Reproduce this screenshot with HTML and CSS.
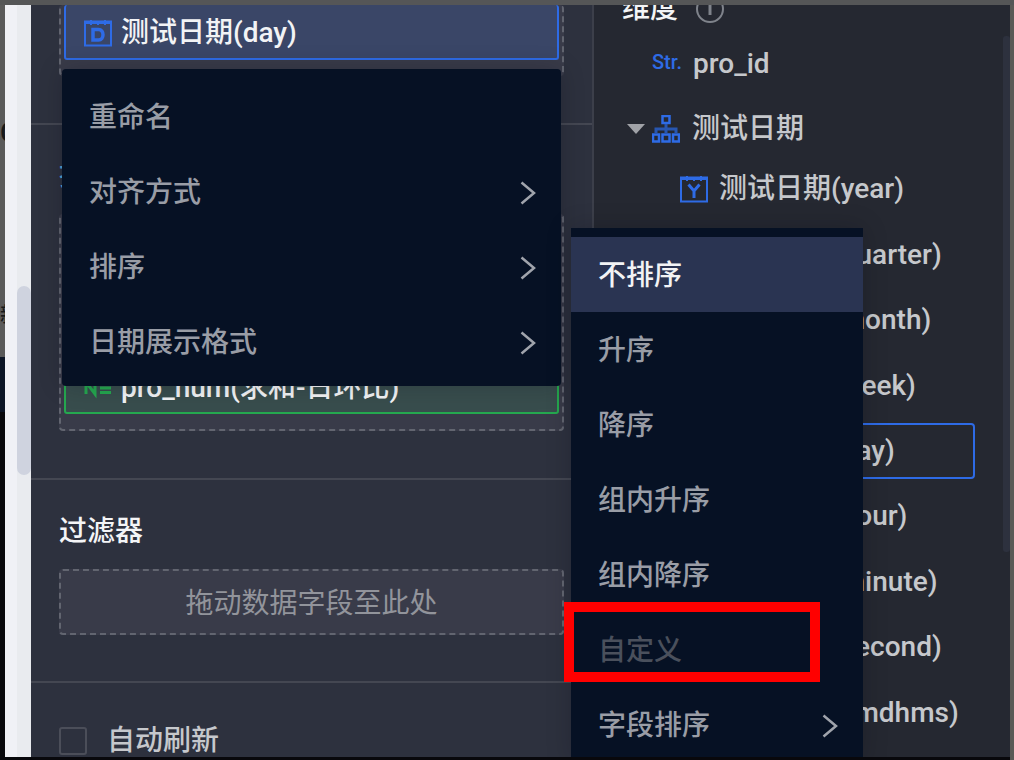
FILE: index.html
```html
<!DOCTYPE html>
<html lang="zh-CN">
<head>
<meta charset="utf-8">
<title>图表设置</title>
<link rel="stylesheet" href="styles.css">
</head>
<body>
<div class="backdrop">
  <div class="behind" aria-hidden="true">
    <div class="behind-light"><span class="glyph">C</span><span class="small">新</span></div>
    <div class="behind-dark"></div>
  </div>
  <main class="window">
    <div class="gutter"><div class="track"><div class="thumb"></div></div></div>

    <section class="settings">
      <div class="group group-dimension">
        <div class="dropzone open-top">
          <div class="chip chip-blue">
            <svg class="icon" viewBox="0 0 28 28"><path d="M1 2.500H27V26.500H1Z M1 4H27" fill="none" stroke="#2e6be6" stroke-width="2"/><path d="M7 1v5M14 2v4M21 1v5" stroke="#2e6be6" stroke-width="2"/><path d="M9 10.500h5.500c6 0 6 10.500 0 10.500H9Z" fill="none" stroke="#2e6be6" stroke-width="3.500"/></svg>
            <span>测试日期(day)</span>
          </div>
        </div>
      </div>

      <div class="group group-measure">
        <h2 class="measure-title">指标</h2>
        <div class="dropzone tall">
          <div class="chip chip-green">
            <svg class="icon" viewBox="0 0 28 28"><path d="M2 20V8L11 20V8M16 9.500h11M16 14h11M16 18.500h11" fill="none" stroke="#25a84f" stroke-width="3"/></svg>
            <span>pro_num(求和-日环比)</span>
          </div>
        </div>
      </div>

      <div class="group group-filter">
        <h2>过滤器</h2>
        <div class="dropzone empty">拖动数据字段至此处</div>
      </div>

      <label class="refresh"><input type="checkbox"><span>自动刷新</span></label>

      <div class="menu context-menu" role="menu">
        <button class="item" role="menuitem">重命名</button>
        <button class="item" role="menuitem">对齐方式<svg class="chevron" viewBox="0 0 16 24"><path d="M1.500 1.500L14 12L1.500 22.500"/></svg></button>
        <button class="item" role="menuitem">排序<svg class="chevron" viewBox="0 0 16 24"><path d="M1.500 1.500L14 12L1.500 22.500"/></svg></button>
        <button class="item" role="menuitem">日期展示格式<svg class="chevron" viewBox="0 0 16 24"><path d="M1.500 1.500L14 12L1.500 22.500"/></svg></button>
      </div>
    </section>

    <aside class="fields">
      <div class="fields-head">
        <h2>维度</h2>
        <svg class="info" viewBox="0 0 28 28"><circle cx="14" cy="14" r="13" fill="none" stroke="#7f838b" stroke-width="2"/><path d="M14 7v13" stroke="#7f838b" stroke-width="3"/></svg>
      </div>
      <div class="field top-field">
        <span class="type">Str.</span><span>pro_id</span>
      </div>
      <div class="field parent-field">
        <svg class="caret" viewBox="0 0 18 10"><path d="M0 0H18L9 10Z" fill="#a0a2a7"/></svg>
        <svg class="icon" viewBox="0 0 28 28"><path d="M10.500 1H17.500V8H10.500ZM1 19.500H7V26.500H1ZM10.500 19.500H17.500V26.500H10.500ZM21 19.500H27V26.500H21Z" fill="none" stroke="#2e6be6" stroke-width="2.500"/><path d="M14 9v10M4 19v-5h20v5" fill="none" stroke="#2856b0" stroke-width="3"/></svg>
        <span>测试日期</span>
      </div>
      <ul class="children">
        <li><svg class="icon" viewBox="0 0 28 28"><path d="M1 2.500H27V26.500H1Z M1 4H27" fill="none" stroke="#2e6be6" stroke-width="2"/><path d="M7 1v5M14 2v4M21 1v5" stroke="#2e6be6" stroke-width="2"/><path d="M8.500 9.500L14 16L19.500 9.500M14 16v7" fill="none" stroke="#2e6be6" stroke-width="3"/></svg><span>测试日期(year)</span></li>
        <li><i class="icon"></i><span>测试日期(quarter)</span></li>
        <li><i class="icon"></i><span>测试日期(month)</span></li>
        <li><i class="icon"></i><span>测试日期(week)</span></li>
        <li class="selected"><i class="icon"></i><span>测试日期(day)</span></li>
        <li><i class="icon"></i><span>测试日期(hour)</span></li>
        <li><i class="icon"></i><span>测试日期(minute)</span></li>
        <li><i class="icon"></i><span>测试日期(second)</span></li>
        <li><i class="icon"></i><span>测试日期(ymdhms)</span></li>
      </ul>
      <div class="scroll-thumb"></div>
    </aside>

    <div class="menu sort-menu" role="menu">
      <button class="item active" role="menuitem">不排序</button>
      <button class="item" role="menuitem">升序</button>
      <button class="item" role="menuitem">降序</button>
      <button class="item" role="menuitem">组内升序</button>
      <button class="item" role="menuitem">组内降序</button>
      <button class="item disabled" role="menuitem" aria-disabled="true">自定义<span class="highlight"></span></button>
      <button class="item" role="menuitem">字段排序<svg class="chevron" viewBox="0 0 16 24"><path d="M1.500 1.500L14 12L1.500 22.500"/></svg></button>
    </div>
  </main>
</div>
</body>
</html>
```

FILE: styles.css
```css
* { box-sizing: border-box; }

body {
  margin: 0;
  font-family: Roboto, "Noto Sans CJK SC", sans-serif;
  font-size: 28px;
  font-weight: 500;
  line-height: 40px;
  color: #c6c8cc;
  background: #08080c;
}

h2 { margin: 0; font-size: 28px; font-weight: 500; color: #f4f5f7; }

.backdrop {
  display: grid;
  grid-template-columns: 5px 1fr;
  height: 100vh;
  padding: 5px 4px 3px 0;
  overflow: hidden;
  background: linear-gradient(#555657, #555657) top / 100% 5px no-repeat,
    linear-gradient(#5a5956, #5a5956) right / 4px 100% no-repeat,
    #08080c;
}

.behind { display: flex; flex-direction: column; overflow: hidden; }
.behind-light {
  display: flex;
  flex-direction: column;
  gap: 152px;
  height: 352px;
  padding-top: 108px;
  background: #5a5a5a;
  color: #17191b;
}
.glyph { line-height: 40px; }
.small { font-size: 20px; line-height: 20px; }
.behind-dark { flex: 1; background: linear-gradient(#0c1526 55px, #08080c 55px); }

.window {
  position: relative;
  display: grid;
  grid-template-columns: 26px 563fr 416fr;
  overflow: hidden;
  background: #252831;
}

.gutter { display: flex; justify-content: flex-end; background: #f0f1f6; }
.track { width: 14px; padding-top: 281px; background: #e9ebef; }
.thumb { height: 189px; border-radius: 7px; background: #cfd3df; }

.settings {
  position: relative;
  display: flex;
  flex-direction: column;
  min-width: 0;
  background: #2d313e;
  border-right: 2px solid #3c3f4a;
}
.group { padding: 0 28px; border-bottom: 2px solid #444752; }
.group-dimension { padding-bottom: 47px; }
.group-measure { padding-top: 31px; padding-bottom: 47px; }
.group-filter { padding-top: 32px; padding-bottom: 46px; }

.dropzone {
  padding: 0 3px 15px;
  border: 2px dashed #626570;
  border-radius: 4px;
  background: #393b49;
}
.open-top { border-top: 0; padding-bottom: 14px; }
.tall { margin-top: 18px; padding-top: 142px; }
.empty { margin-top: 17px; padding: 13px 12px 9px; text-align: center; color: #92949b; font-weight: 400; }

.chip {
  display: flex;
  align-items: center;
  gap: 9px;
  padding: 8px 18px 4px;
  border: 2px solid;
  border-radius: 3px;
  color: #f2f3f5;
}
.chip-blue { padding-bottom: 5px; border-color: #2e6be6; border-top: 0; background: #3a4667; }
.chip-green { border-color: #25a84f; background: #384d4d; }
.measure-title { color: #4f9fd0; }

.icon { flex: none; width: 28px; height: 28px; }

.refresh { display: flex; align-items: center; gap: 20px; padding: 38px 28px 0; }
.refresh input {
  appearance: none;
  width: 28px;
  height: 28px;
  margin: 0;
  border: 2px solid #4b4e59;
  border-radius: 3px;
}

.menu {
  position: absolute;
  background: #061124;
  border-radius: 4px;
  box-shadow: 0 0 24px rgba(10, 12, 20, 0.2);
}
.context-menu { top: 64px; left: 31px; right: 31px; padding: 10px 0 7px; }
.sort-menu { top: 223px; left: 566px; width: 292px; padding-top: 9px; border-radius: 0; }

.item {
  position: relative;
  display: flex;
  align-items: center;
  justify-content: space-between;
  width: 100%;
  height: 75px;
  padding: 3px 25px 0 27px;
  border: 0;
  background: none;
  font: inherit;
  color: #999da6;
  text-align: left;
}
.active { background: #2a3452; color: #f2f3f5; }
.disabled { color: #4a505c; }
.highlight { position: absolute; top: -10px; bottom: 5px; left: -7px; right: 43px; border: 10px solid #ff0000; }

.chevron { width: 16px; height: 24px; fill: none; stroke: #a0a4ac; stroke-width: 2.5; }

.fields { position: relative; display: flex; flex-direction: column; min-width: 0; }
.fields-head { display: flex; align-items: center; gap: 18px; margin-top: -16px; padding-left: 28px; }
.info { width: 28px; height: 28px; }
.field { display: flex; align-items: center; height: 65px; gap: 11px; padding-left: 58px; }
.top-field { margin-top: 2px; }
.type { width: 30px; padding-bottom: 3px; font-size: 20px; line-height: 24px; color: #2e6be6; white-space: nowrap; }
.parent-field { padding-left: 33px; gap: 12px; }
.caret { width: 18px; height: 10px; margin-right: -5px; }

.children {
  flex: 1;
  display: flex;
  flex-direction: column;
  gap: 9px;
  margin: 0 35px 20px 72px;
  padding: 0;
  list-style: none;
}
.children li {
  flex: 1;
  display: flex;
  align-items: center;
  gap: 11px;
  padding-left: 12px;
  border: 2px solid transparent;
  border-radius: 4px;
  white-space: nowrap;
}
.children .selected { border-color: #2e6be6; }

.scroll-thumb { position: absolute; top: 31px; right: 0; width: 7px; height: 516px; border-radius: 3px; background: #2d313e; }
```
